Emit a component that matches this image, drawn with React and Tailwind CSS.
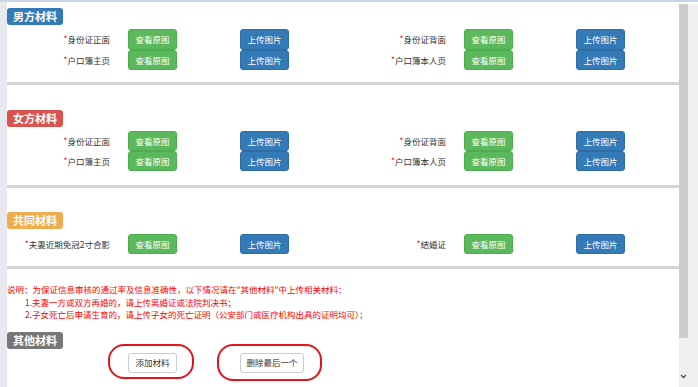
import React from "react";

const Badge = ({ color, children }) => (
  <div className={`w-[56px] h-[17px] rounded-[3px] ${color} text-white font-bold text-[11px] leading-[17px] text-center`}>
    {children}
  </div>
);

const Label = ({ text }) => (
  <div className="w-[103px] text-right text-[8.5px] text-[#333] leading-none">
    <span className="text-[#e02020] relative top-[-1px]">*</span>
    {text}
  </div>
);

const Half = ({ label, h = "h-[20px]" }) => (
  <div className="w-[336px] flex items-center">
    <Label text={label} />
    <div className={`ml-[18px] w-[49px] ${h} rounded-[3px] bg-[#5cb85c] border border-[#4cae4c] text-white text-[8.5px] flex items-center justify-center`}>
      查看原图
    </div>
    <div className={`ml-[63px] w-[49px] ${h} rounded-[3px] bg-[#337ab7] border border-[#2e6da4] text-white text-[8.5px] flex items-center justify-center`}>
      上传图片
    </div>
  </div>
);

const Row = ({ a, b, h }) => (
  <div className="flex">
    <Half label={a} h={h} />
    <Half label={b} h={h} />
  </div>
);

const Divider = () => <div className="h-[3px] bg-[#d3d3d3]" />;

export default function App() {
  return (
    <div className="w-[698px] h-[387px] overflow-hidden bg-white flex flex-col font-['Noto_Sans_CJK_SC','Microsoft_YaHei',sans-serif]">
      <div className="h-[2px] bg-[#c9d4e4] shrink-0" />
      <div className="flex flex-1 min-h-0">
        <div className="w-[7px] bg-[#e7e9ee] shrink-0" />
        <div className="w-[672px] flex flex-col shrink-0">
          {/* 男方材料 */}
          <div className="pt-[6px] pb-[12px]">
            <Badge color="bg-[#337ab7]">男方材料</Badge>
            <div className="mt-[4px] flex flex-col">
              <Row a="身份证正面" b="身份证背面" h="h-[21px]" />
              <Row a="户口簿主页" b="户口簿本人页" h="h-[20px]" />
            </div>
          </div>
          <Divider />
          {/* 女方材料 */}
          <div className="pt-[25px] pb-[14px]">
            <Badge color="bg-[#d9534f]">女方材料</Badge>
            <div className="mt-[4px] flex flex-col">
              <Row a="身份证正面" b="身份证背面" />
              <Row a="户口簿主页" b="户口簿本人页" />
            </div>
          </div>
          <Divider />
          {/* 共同材料 */}
          <div className="pt-[24px] pb-[12px]">
            <Badge color="bg-[#f0ad4e]">共同材料</Badge>
            <div className="mt-[5px] flex flex-col">
              <Row a="夫妻近期免冠2寸合影" b="结婚证" />
            </div>
          </div>
          <Divider />
          {/* 说明 + 其他材料 */}
          <div className="relative flex-1 pt-[14px]">
            <div className="text-[#ff0000] text-[8.5px] leading-[12.5px]">
              <div>说明：为保证信息审核的通过率及信息准确性，以下情况请在"其他材料"中上传相关材料：</div>
              <div className="pl-[18px]">1.夫妻一方或双方再婚的，请上传离婚证或法院判决书；</div>
              <div className="pl-[18px]">2.子女死亡后申请生育的，请上传子女的死亡证明（公安部门或医疗机构出具的证明均可）；</div>
            </div>
            <div className="mt-[11px]">
              <Badge color="bg-[#777777]">其他材料</Badge>
            </div>
            <div className="mt-[4px] flex">
              <div className="ml-[121px] w-[49px] h-[20px] rounded-[3px] bg-white border border-[#cccccc] text-[#333] text-[8.5px] flex items-center justify-center">
                添加材料
              </div>
              <div className="ml-[63px] w-[64px] h-[20px] rounded-[3px] bg-white border border-[#cccccc] text-[#333] text-[8.5px] flex items-center justify-center">
                删除最后一个
              </div>
            </div>
            <div className="absolute left-[101px] top-[75px] w-[86px] h-[35px] border-2 border-[#e3141c] rounded-[16px]" />
            <div className="absolute left-[210px] top-[75px] w-[105px] h-[37px] border-2 border-[#e3141c] rounded-[16px]" />
          </div>
        </div>
        <div className="w-[19px] bg-[#f0f0f0] flex flex-col shrink-0">
          <div className="h-[2px] bg-white" />
          <div className="w-[9px] h-[334px] bg-[#cdcdcd]" />
          <div className="flex-1" />
          <div className="w-[9px] flex justify-center mb-[8px]">
            <svg width="7" height="5" viewBox="0 0 7 5">
              <path d="M1 1 L3.5 3.5 L6 1" fill="none" stroke="#555" strokeWidth="1.3" />
            </svg>
          </div>
        </div>
      </div>
    </div>
  );
}
